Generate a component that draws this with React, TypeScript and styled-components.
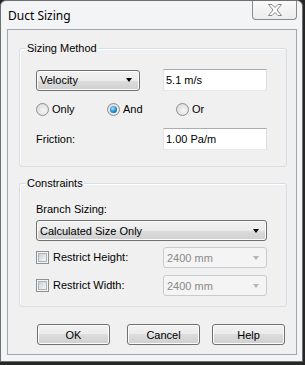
import React from 'react';
import styled, { createGlobalStyle } from 'styled-components';

const GlobalStyle = createGlobalStyle`
  body {
    margin: 0;
    background: #262626;
    font-family: "Liberation Sans", Arial, sans-serif;
    font-size: 11px;
    color: #000;
  }
`;

const Window = styled.div`
  width: 303px;
  height: 362px;
  box-sizing: border-box;
  background: #f3f4f6;
  border: 1px solid #6f6f6f;
  border-radius: 6px 6px 0 0;
  padding: 0 5px 6px 6px;
  display: flex;
  flex-direction: column;
`;

const TitleBar = styled.div`
  height: 28px;
  flex: none;
  display: flex;
  justify-content: space-between;
  align-items: flex-start;
  padding-left: 1px;
`;

const Title = styled.div`
  font-family: "Noto Sans", "Liberation Sans", sans-serif;
  font-size: 12px;
  line-height: 16px;
  margin-top: 7px;
`;

const CloseButton = styled.div`
  width: 45px;
  height: 19px;
  box-sizing: border-box;
  border: 1px solid #8b8b8b;
  border-top: none;
  border-radius: 0 0 4px 4px;
  background: linear-gradient(#fafafa, #ececec);
  display: flex;
  align-items: center;
  justify-content: center;
`;

const Client = styled.div`
  flex: 1;
  border: 1px solid #a3a7ad;
  background: #f0f0f0;
  display: flex;
  flex-direction: column;
`;

const Group = styled.fieldset<{ $top: number }>`
  margin: ${(p) => p.$top}px 0 0 11px;
  width: 268px;
  box-sizing: border-box;
  min-width: 0;
  padding: 0;
  border: 1px solid #d5dfe5;
  border-radius: 3px;
  box-shadow: inset 1px 1px 0 #fff;
`;

const Legend = styled.legend`
  margin-left: 6px;
  padding: 0 1px;
  line-height: 13px;
  background: #f0f0f0;
`;

const GroupBody = styled.div<{ $pt: number; $pb: number }>`
  padding: ${(p) => p.$pt}px 0 ${(p) => p.$pb}px 16px;
  display: flex;
  flex-direction: column;
`;

const Row = styled.div<{ $mt?: number }>`
  display: flex;
  align-items: center;
  margin-top: ${(p) => p.$mt || 0}px;
`;

const LabelCell = styled.div`
  width: 127px;
  display: flex;
  align-items: center;
  line-height: 13px;
`;

const Label = styled.div`
  line-height: 13px;
`;

const Combo = styled.div<{ $w: number; $disabled?: boolean }>`
  width: ${(p) => p.$w}px;
  height: 21px;
  box-sizing: border-box;
  border: 1px solid ${(p) => (p.$disabled ? '#c9cccf' : '#707070')};
  border-radius: 3px;
  background: ${(p) =>
    p.$disabled
      ? '#f4f4f4'
      : 'linear-gradient(#f2f2f2 0%, #ebebeb 50%, #dddddd 50%, #cfcfcf 100%)'};
  box-shadow: ${(p) => (p.$disabled ? 'none' : 'inset 0 0 0 1px #fbfbfb')};
  color: ${(p) => (p.$disabled ? '#8a8a8a' : '#000')};
  display: flex;
  align-items: center;
  justify-content: space-between;
  padding: 0 7px 0 3px;
`;

const Arrow = styled.span<{ $disabled?: boolean }>`
  width: 0;
  height: 0;
  border-left: 3.5px solid transparent;
  border-right: 3.5px solid transparent;
  border-top: 4px solid ${(p) => (p.$disabled ? '#b4b4b4' : '#000')};
`;

const TextBox = styled.div`
  width: 104px;
  height: 22px;
  box-sizing: border-box;
  border: 1px solid;
  border-color: #abadb3 #dbdfe6 #e3e9ef #e2e3ea;
  background: #fff;
  padding: 0 2px;
  display: flex;
  align-items: center;
`;

const RadioItem = styled.div<{ $w?: number }>`
  width: ${(p) => (p.$w ? `${p.$w}px` : 'auto')};
  display: flex;
  align-items: center;
  gap: 3px;
  line-height: 13px;
`;

const Radio = styled.span<{ $checked?: boolean }>`
  width: 13px;
  height: 13px;
  box-sizing: border-box;
  border-radius: 50%;
  border: 1px solid #8d8d8d;
  background: radial-gradient(circle at 60% 60%, #f6f6f6 0%, #dedede 70%, #cdcdcd 100%);
  display: flex;
  align-items: center;
  justify-content: center;

  &::after {
    content: '';
    display: ${(p) => (p.$checked ? 'block' : 'none')};
    width: 7px;
    height: 7px;
    border-radius: 50%;
    background: radial-gradient(circle at 40% 35%, #a6e4ff 0%, #2d8fd0 50%, #0c4a8c 100%);
  }
`;

const Check = styled.span`
  width: 13px;
  height: 13px;
  flex: none;
  box-sizing: border-box;
  border: 1px solid #8e8f8f;
  background: #f4f4f4;
  display: flex;
  align-items: center;
  justify-content: center;
  margin-right: 4px;

  &::after {
    content: '';
    width: 9px;
    height: 9px;
    box-sizing: border-box;
    border: 1px solid #aeb3b9;
    background: linear-gradient(135deg, #cbcfd5, #f6f6f6);
  }
`;

const ButtonRow = styled.div`
  display: flex;
  margin-top: 17px;
  padding-left: 29px;
`;

const Button = styled.div<{ $ml?: number }>`
  width: 73px;
  height: 21px;
  box-sizing: border-box;
  margin-left: ${(p) => p.$ml || 0}px;
  border: 1px solid #707070;
  border-radius: 3px;
  background: linear-gradient(#f2f2f2 0%, #ebebeb 50%, #dddddd 50%, #cfcfcf 100%);
  box-shadow: inset 0 0 0 1px #fcfcfc;
  display: flex;
  align-items: center;
  justify-content: center;
`;

const CloseGlyph = () => (
  <svg width="14" height="12" viewBox="0 0 14 12">
    <polygon
      points="0.5,0.5 4,0.5 7,3.5 10,0.5 13.5,0.5 9,6 13.5,11.5 10,11.5 7,8.5 4,11.5 0.5,11.5 5,6"
      fill="#fdfdfd"
      stroke="#8a8a8a"
      strokeWidth="1"
    />
  </svg>
);

const App = () => (
  <>
    <GlobalStyle />
    <Window>
      <TitleBar>
        <Title>Duct Sizing</Title>
        <CloseButton>
          <CloseGlyph />
        </CloseButton>
      </TitleBar>

      <Client>
        <Group $top={12}>
          <Legend>Sizing Method</Legend>
          <GroupBody $pt={14} $pb={16}>
            <Row>
              <LabelCell>
                <Combo $w={104}>
                  <span>Velocity</span>
                  <Arrow />
                </Combo>
              </LabelCell>
              <TextBox>5.1 m/s</TextBox>
            </Row>

            <Row $mt={12}>
              <RadioItem $w={71}>
                <Radio />
                Only
              </RadioItem>
              <RadioItem $w={69}>
                <Radio $checked />
                And
              </RadioItem>
              <RadioItem>
                <Radio />
                Or
              </RadioItem>
            </Row>

            <Row $mt={12}>
              <LabelCell>Friction:</LabelCell>
              <TextBox>1.00 Pa/m</TextBox>
            </Row>
          </GroupBody>
        </Group>

        <Group $top={10}>
          <Legend>Constraints</Legend>
          <GroupBody $pt={13} $pb={10}>
            <Label>Branch Sizing:</Label>
            <Row $mt={4}>
              <Combo $w={231}>
                <span>Calculated Size Only</span>
                <Arrow />
              </Combo>
            </Row>

            <Row $mt={6}>
              <LabelCell>
                <Check />
                Restrict Height:
              </LabelCell>
              <Combo $w={104} $disabled>
                <span>2400 mm</span>
                <Arrow $disabled />
              </Combo>
            </Row>

            <Row $mt={7}>
              <LabelCell>
                <Check />
                Restrict Width:
              </LabelCell>
              <Combo $w={104} $disabled>
                <span>2400 mm</span>
                <Arrow $disabled />
              </Combo>
            </Row>
          </GroupBody>
        </Group>

        <ButtonRow>
          <Button>OK</Button>
          <Button $ml={17}>Cancel</Button>
          <Button $ml={12}>Help</Button>
        </ButtonRow>
      </Client>
    </Window>
  </>
);

export default App;
